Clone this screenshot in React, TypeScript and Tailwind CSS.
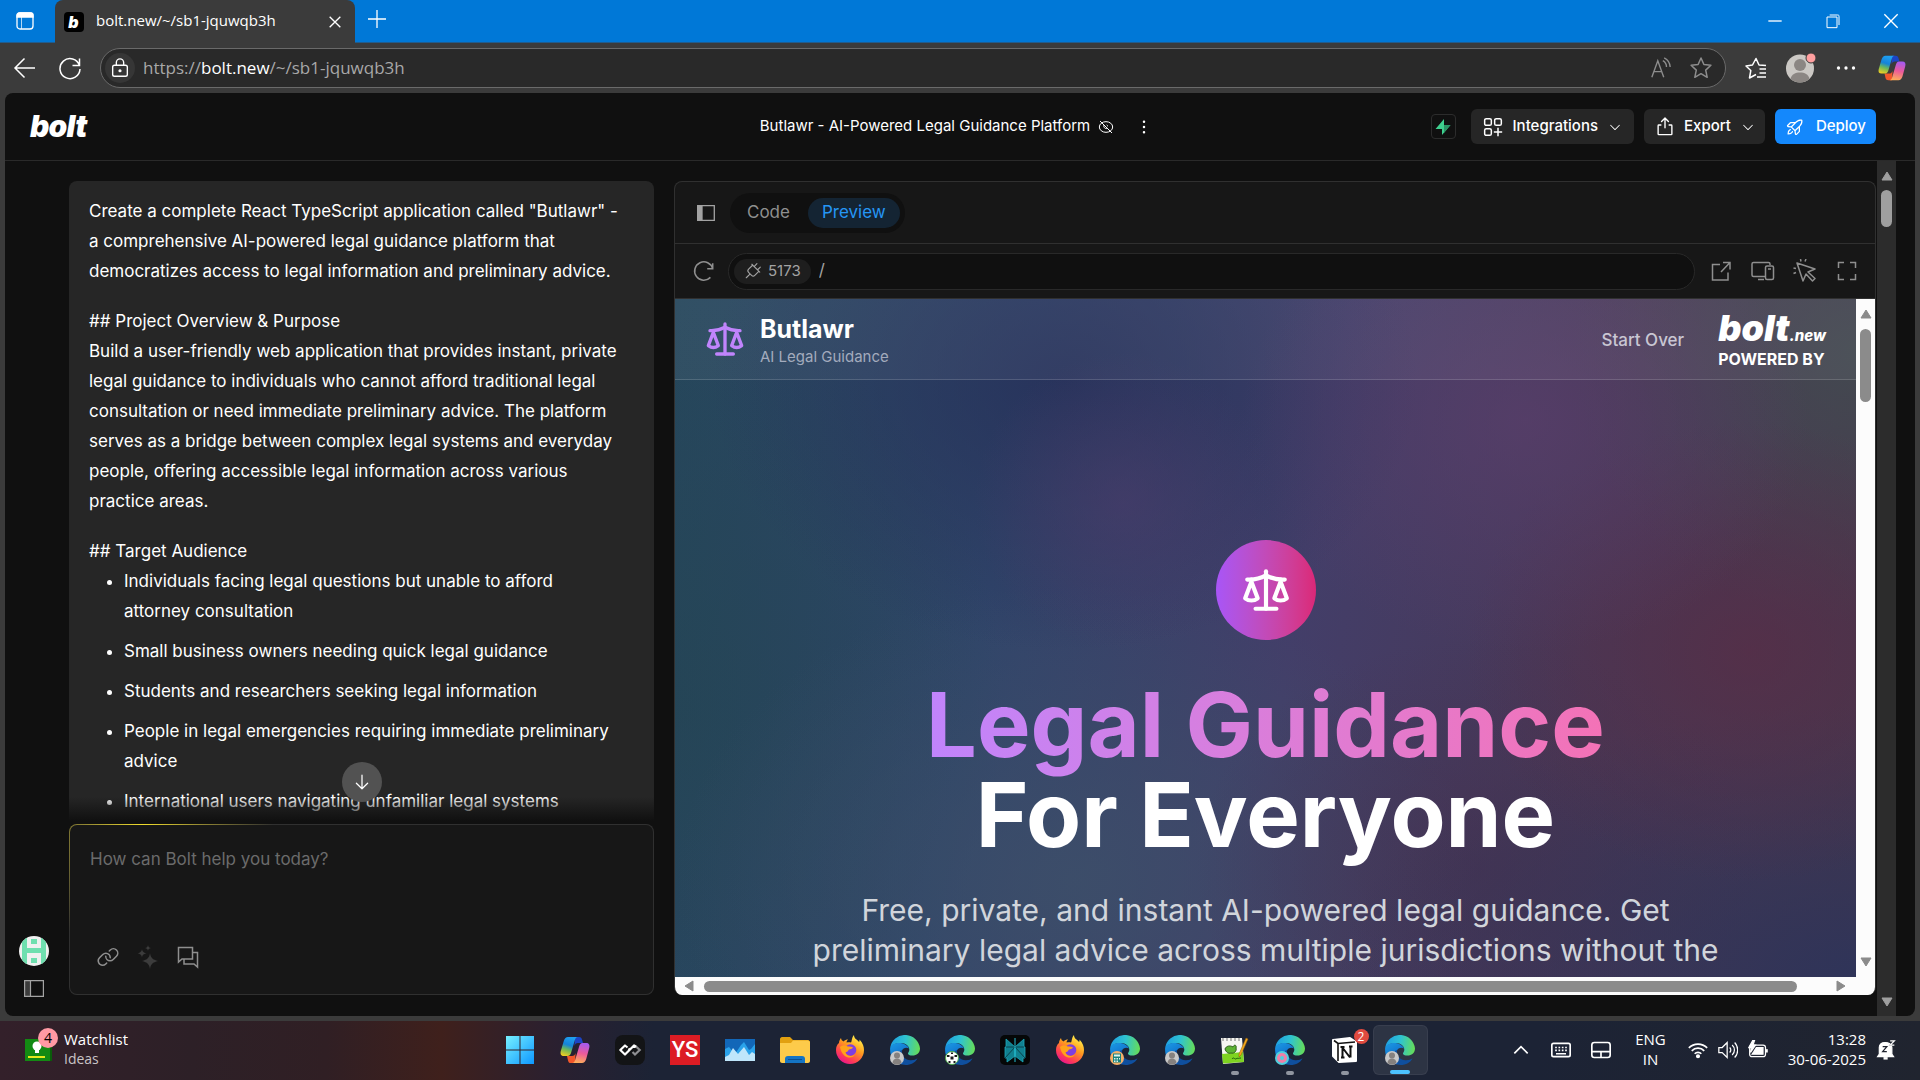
import { type ReactNode, type SVGProps } from "react";
import {
	PiArrowDown,
	PiCaretDown,
	PiDotsThreeVerticalBold,
	PiExport,
	PiLink,
	PiPlug,
	PiRocketLaunch,
} from "react-icons/pi";
import { Scale } from "lucide-react";

const UI = "font-['Inter',sans-serif]";
const SYS = "font-['Open_Sans',sans-serif]";

const Line = ({ children, ...rest }: SVGProps<SVGSVGElement> & { children: ReactNode }) => (
	<svg viewBox="0 0 24 24" fill="none" stroke="currentColor" strokeWidth={1.5} aria-hidden="true" {...rest}>
		{children}
	</svg>
);

const Copilot = ({ className }: { className: string }) => (
	<svg viewBox="0 0 30 30" className={className} aria-hidden="true">
		<defs>
			<linearGradient id="cp1" x1="0.5" y1="0" x2="0.2" y2="1">
				<stop offset="0" stopColor="#1f9ff0" />
				<stop offset="0.4" stopColor="#1583d8" />
				<stop offset="0.65" stopColor="#6cb85a" />
				<stop offset="1" stopColor="#f5cf1f" />
			</linearGradient>
			<linearGradient id="cp2" x1="0.6" y1="0" x2="0.4" y2="1">
				<stop offset="0" stopColor="#a55af0" />
				<stop offset="0.5" stopColor="#ec5a9a" />
				<stop offset="1" stopColor="#fdae5a" />
			</linearGradient>
		</defs>
		<path d="M15 2h4c2 0 2.600 1 3 2.600L23 8h-5c-2 0-3 1-3.600 3z" fill="#1b44c4" />
		<path d="M15 28h-4c-2 0-2.600-1-3-2.600L7 21h5c2 0 3-1 3.600-3z" fill="#f2572b" />
		<path d="M8 2h10c-2 0-2.700 1.500-3.200 3.200L11 18c-.7 2-1.600 3-3.600 3H4c-3 0-4-2-3.200-5l3-10C4.600 3.500 6 2 8 2z" fill="url(#cp1)" />
		<path d="M22 28H12c2 0 2.700-1.500 3.200-3.200L19 12c.7-2.600 1.600-4 3.600-4H26c3 0 4 2 3.200 5l-3 11c-.8 2.500-2.200 4-4.200 4z" fill="url(#cp2)" />
	</svg>
);

const Edge = ({ children }: { children?: ReactNode }) => (
	<svg viewBox="0 0 30 30" className="size-[30px]" aria-hidden="true">
		<defs>
			<linearGradient id="eg1" x1="0" y1="0.4" x2="1" y2="0.5">
				<stop offset="0" stopColor="#1ea0e4" />
				<stop offset="0.5" stopColor="#2fc3d0" />
				<stop offset="1" stopColor="#66dd58" />
			</linearGradient>
			<linearGradient id="eg2" x1="0" y1="0" x2="0.5" y2="1">
				<stop offset="0" stopColor="#1b9be4" />
				<stop offset="1" stopColor="#0d5fc4" />
			</linearGradient>
		</defs>
		<path d="M.2 13A15 15 0 0 1 30 13.500c0 4.500-3.500 7-7.500 7-3.500 0-5-1.300-4.400-2.600.6-1 1.200-1.600 1.200-3.400 0-3.500-3.500-6.500-8.300-6.500C5.600 8 1.500 10 .2 13z" fill="url(#eg1)" />
		<path d="M.1 13C1 9.500 6 7.500 10.500 8c4 .4 7.500 2.800 8.500 5.500-1.600-1.300-6-1.500-7.200 2.500C10.500 21 14 26 19 28.500 9.500 32 0 25.500.1 15z" fill="url(#eg2)" />
		<path d="M12 15c-1.500 6 4 10.500 9 10.200 3 0 4.800-1 6.500-2-2 4.300-6.500 6.800-12 6.800-4.500-1.500-7.500-5.500-7.500-9.500 0-2.600 1.600-5 4-5.500z" fill="#0f4f9e" />
		{children}
	</svg>
);

const Person = () => (
	<>
		<circle cx="7" cy="23" r="7" fill="#c9c9c9" />
		<circle cx="7" cy="20.500" r="3" fill="#85817f" />
		<path d="M2.500 28a4.500 4.500 0 0 1 9 0 7 7 0 0 1-9 0z" fill="#85817f" />
	</>
);

const Firefox = () => (
	<svg viewBox="0 0 30 30" className="size-[30px]" aria-hidden="true">
		<defs>
			<linearGradient id="ff1" x1="0.85" y1="0.1" x2="0.3" y2="1">
				<stop offset="0" stopColor="#fff04a" />
				<stop offset="0.4" stopColor="#ff9a1f" />
				<stop offset="0.75" stopColor="#ff3f52" />
				<stop offset="1" stopColor="#e8158c" />
			</linearGradient>
		</defs>
		<path d="M4 8c0-2 1-4 2-5 .3 2 1 2.600 2.500 3.500C10 5 11.500 4.500 13 4.500c-1 1-1.500 2-1.400 3 1.500-.5 3-.5 4.400 0 1-1 .5-5 3-7.500 0 4 3 4 5 7 .6-.6.600-1.500.5-2.500C28 8 29 12 29 15a14 14 0 0 1-28 0c0-3 1-5.500 3-7z" fill="url(#ff1)" />
		<circle cx="15.500" cy="15" r="5.800" fill="#7f3fe0" />
		<path d="M5 12c3-2.500 6-1.500 8-.500 2 .2 4 0 5 1-1 1.500-3 1.600-4 2-1 .6-1 3-3.500 2.500C11 22 18 22 20 19c-2 6-13 5-15-7z" fill="#ffa31a" />
	</svg>
);

const taskIcons: ReactNode[] = [
	<svg viewBox="0 0 30 30" className="size-[30px]">
		<defs>
			<linearGradient id="win" gradientUnits="userSpaceOnUse" x1="0" y1="0" x2="30" y2="30">
				<stop offset="0" stopColor="#7af3ff" />
				<stop offset="1" stopColor="#0a94ff" />
			</linearGradient>
		</defs>
		<path d="M1 1h13.500v13.500H1zM15.500 1H29v13.500H15.500zM1 15.500h13.500V29H1zM15.500 15.500H29V29H15.500z" fill="url(#win)" />
	</svg>,
	<Copilot className="size-[30px]" />,
	<svg viewBox="0 0 30 30" className="size-[30px]">
		<rect width="30" height="30" rx="8" fill="#131416" />
		<path d="m20 10.500 4.700 4.500-4.700 4.500-2.500-2.500" fill="none" stroke="#8f8f92" strokeWidth="2.200" />
		<path d="m12.500 12.500-2.500-2-4.700 4.500 4.700 4.500 9-9 2 1.500" fill="none" stroke="#fff" strokeWidth="2.200" strokeLinejoin="round" />
		<path d="m13.500 13.500 1.500 1.500" fill="none" stroke="#fff" strokeWidth="2" />
	</svg>,
	<span className="flex size-[30px] items-center justify-center bg-[#dc1c24] font-['Roboto',sans-serif] text-[22px] font-medium leading-none text-white">
		YS
	</span>,
	<svg viewBox="0 0 30 30" className="size-[30px]">
		<path d="M0 4h30v22H0z" fill="#1267b8" />
		<path d="m0 14 4-2 6 7 6-9 3-3 5 8 2-1 4-5v17H0z" fill="#2aa2ea" />
		<path d="m0 22 4-2 4-7 5 6 6-7 5 8 3-3 3 2v7H0z" fill="#bfe6fb" />
	</svg>,
	<svg viewBox="0 0 30 30" className="size-[30px]">
		<path d="M0 4c0-1 1-2 2-2h8l3 3h15c1 0 2 1 2 2v4H0z" fill="#e2a010" />
		<path d="M0 8h11l2-2.500h15c1 0 2 1 2 2V26c0 1-1 2-2 2H2c-1 0-2-1-2-2z" fill="#fdcb4a" />
		<path d="M5 28v-4c0-1.700 1-3 3-3h14c2 0 3 1.300 3 3v4z" fill="#1474c4" />
		<path d="M8 24.500h14" stroke="#0a4f91" />
	</svg>,
	<Firefox />,
	<Edge><Person /></Edge>,
	<Edge>
		<circle cx="7" cy="23" r="6.500" fill="#fff" stroke="#4aa848" />
		<path d="M5.500 21.500h3v3h-3zM2 20h2.500v2H2zM9.500 20H12v2H9.500zM3.500 26h2v2h-2zM8.500 26h2v2h-2zM6 17.500h2v1.500H6z" fill="#1c1c1c" />
	</Edge>,
	<svg viewBox="0 0 30 30" className="size-[30px]">
		<rect width="30" height="30" rx="5" fill="#050707" />
		<path d="M15 12 6 4v8H5v11h2v4l8-6zM15 12l9-8v8h1v11h-2v4l-8-6z" fill="#11818f" stroke="#1ca9ba" strokeWidth="0.800" />
		<path d="M15 12 5 23M15 12l10 11M6 12h18" stroke="#07333a" fill="none" strokeWidth="0.800" />
		<path d="M15 3v24" stroke="#25bccf" />
	</svg>,
	<Firefox />,
	<Edge>
		<circle cx="7" cy="23" r="7" fill="#f4b06a" />
		<path d="M3 18.500h8v9H3z" fill="#17827c" />
		<path d="M4 19.500h6v2H4zM4 23h1.500v1.500H4zM6.500 23H8v1.500H6.500zM9 23h1v1.500H9zM4 25.500h1.500V27H4zM6.500 25.500H8V27H6.500z" fill="#dff5ef" />
	</Edge>,
	<Edge><Person /></Edge>,
	<svg viewBox="0 0 30 30" className="size-[30px]">
		<path d="M1 3h21l2 24-21 2z" fill="#f6f6f2" />
		<path d="m2 19 21-2 1 10-21 1.500z" fill="#7ed321" />
		<path d="M3 3v3M7 3v3M11 3v3M15 3v3M19 3v3" stroke="#777" />
		<path d="M5 14c1-3 5-4 8-2 1-3 4-2 3 1 1 3-2 6-5 5-3 1-5-1-6-4z" fill="#5cb332" stroke="#2d5f1a" />
		<path d="M12 24c2-3 3 2 5-1 1 1 2 0 4 0" stroke="#1f5f12" fill="none" />
		<path d="m19 19 7-16 2 1-7 16-2 2z" fill="#f3a81c" stroke="#8a5a10" strokeWidth="0.500" />
	</svg>,
	<Edge>
		<circle cx="7" cy="23" r="7" fill="#4fd0de" />
		<circle cx="7" cy="23" r="3.500" fill="none" stroke="#ef7fa8" strokeWidth="3" />
	</Edge>,
	<svg viewBox="0 0 30 30" className="size-[30px]">
		<path d="m3 5 17-2 6 4v19l-17 1-6-6z" fill="#fff" stroke="#fff" strokeLinejoin="round" strokeWidth="2" />
		<path d="m4 5.500 4 3 17-1.500M8 8.500V26" stroke="#111" fill="none" strokeWidth="1.600" />
		<path d="M12.500 22.500v-10M12 12l8 10.500M20.500 22.500v-11M10.500 12h4M19 11.500h3.500M11 22.500h3.500" stroke="#111" fill="none" strokeWidth="2" />
	</svg>,
	<Edge><Person /></Edge>,
];

const taskNames = [
	"Start", "Copilot", "Dev Home", "YS", "System monitor", "File Explorer", "Firefox", "Edge", "Edge football",
	"Perplexity", "Firefox 2", "Edge calculator", "Edge profile", "Notepad++", "Edge donut", "Notion", "Edge window",
];

const Triangle = ({ className }: { className: string }) => (
	<svg viewBox="0 0 12 10" className={className} aria-hidden="true">
		<path d="M6 1 11 9H1z" fill="currentColor" stroke="currentColor" strokeLinejoin="round" />
	</svg>
);

function TitleBar() {
	return (
		<div className="flex h-[43px] shrink-0 items-stretch border-b border-[#215c8d] bg-[#0078d7] text-white">
			<button aria-label="Tab actions" className="flex w-[55px] items-center justify-center pr-1.5">
				<svg viewBox="0 0 18 18" className="size-[18px]" fill="none" stroke="#fff" strokeWidth="1.300">
					<rect x="1" y="1" width="16" height="16" rx="3" />
					<path d="M1 3c0-1 1-2 2-2h12c1 0 2 1 2 2v2H1z" fill="#fff" />
					<path d="M5.500 5v12" strokeWidth="1" opacity="0.700" />
				</svg>
			</button>
			<div className="-mb-px flex w-[300px] items-center rounded-t-lg bg-[#3b3b3b] pl-[9px] pr-2.5">
				<span className={`flex size-5 items-center justify-center rounded bg-black pr-px text-base font-black italic leading-none ${UI}`}>
					b
				</span>
				<span className={`ml-3 flex-1 pb-0.5 text-[15px] ${SYS}`}>bolt.new/~/sb1-jquwqb3h</span>
				<button aria-label="Close tab" className="p-0.5">
					<Line className="size-4"><path d="m4 4 16 16M20 4 4 20" strokeWidth="2" /></Line>
				</button>
			</div>
			<button aria-label="New tab" className="flex w-11 items-center justify-center pb-1">
				<Line className="size-6"><path d="M12 3v18M3 12h18" strokeWidth="1.300" /></Line>
			</button>
			<div className="ml-auto flex">
				<button aria-label="Minimize" className="flex w-[58px] items-center justify-center">
					<Line className="size-4"><path d="M2 12h20" strokeWidth="2" /></Line>
				</button>
				<button aria-label="Restore" className="flex w-[58px] items-center justify-center">
					<Line className="size-4"><path d="M3 6h15v16H3zM7 3h12c2 0 2 1 2 2v13" /></Line>
				</button>
				<button aria-label="Close" className="flex w-[58px] items-center justify-center">
					<Line className="size-4"><path d="m2 2 20 20M22 2 2 22" strokeWidth="2" /></Line>
				</button>
			</div>
		</div>
	);
}

function AddressBar() {
	return (
		<div className="flex h-[50px] shrink-0 items-center bg-[#3b3b3b] pb-px text-white">
			<button aria-label="Back" className="flex w-[50px] items-center justify-center">
				<Line className="size-6"><path d="M22 12H2m9.500-9.500L2 12l9.500 9.500" /></Line>
			</button>
			<button aria-label="Refresh" className="flex w-10 items-center justify-center">
				<Line className="size-6"><path d="M21.500 9.500A10 10 0 1 0 22 13M21.500 2.500v7h-7" /></Line>
			</button>
			<div className="ml-2.5 mr-3 flex h-10 flex-1 items-center rounded-full border border-[#6a6a6a] bg-[#292929] px-1">
				<span className="flex size-[30px] items-center justify-center rounded-full bg-[#363636]">
					<Line className="size-[22px]">
						<rect x="4" y="9" width="16" height="12" rx="2" />
						<path d="M8 9V6a4 4 0 0 1 8 0v3" />
						<circle cx="12" cy="15" r="1" fill="currentColor" />
					</Line>
				</span>
				<span className={`ml-2 flex-1 text-[17px] text-[#a8a8a8] ${SYS}`}>
					https://<span className="text-white">bolt.new</span>/~/sb1-jquwqb3h
				</span>
				<button aria-label="Read aloud" className="flex w-10 items-center justify-center text-[#8d8d8d]">
					<Line className="size-[22px]"><path d="m2 22 6.500-18L15 22M4.500 16h8M14 4a8 8 0 0 1 4 7M15.500 1a12 12 0 0 1 6.500 10" /></Line>
				</button>
				<button aria-label="Favourite" className="flex w-10 items-center justify-center text-[#8d8d8d]">
					<Line className="size-6" strokeLinejoin="round"><path d="m12 2 2.900 6.500 7 .8-5.200 4.800 1.500 7.200L12 17.700l-6.200 3.600 1.500-7.200-5.200-4.800 7-.8z" /></Line>
				</button>
			</div>
			<button aria-label="Favourites" className="flex w-9 items-center justify-center">
				<Line className="size-6" strokeLinejoin="round"><path d="M12 18.500 5.500 22l1.300-7.500L2 10l6.500-1L12 2.500 15 9l7 .5M15.500 13H22M15.500 17H22M13 21h9" /></Line>
			</button>
			<button aria-label="Profile" className="flex w-[54px] items-center justify-center">
				<svg viewBox="0 0 30 30" className="size-[30px]">
					<circle cx="14" cy="15.500" r="14" fill="#cbc8c4" />
					<circle cx="14" cy="12" r="6" fill="#8b8683" />
					<path d="M4.500 26c1-5 5-6.500 9.500-6.500s8.500 1.500 9.500 6.500c-5 4.500-14 4.500-19 0z" fill="#8b8683" />
					<circle cx="25" cy="5" r="5" fill="#ff9f9f" stroke="#3b3b3b" />
				</svg>
			</button>
			<button aria-label="Settings" className="flex w-9 items-center justify-center">
				<Line className="size-5" stroke="none" fill="currentColor"><circle cx="3" cy="12" r="2" /><circle cx="12" cy="12" r="2" /><circle cx="21" cy="12" r="2" /></Line>
			</button>
			<button aria-label="Copilot" className="flex w-14 items-center justify-center"><Copilot className="size-7" /></button>
		</div>
	);
}

function AppHeader() {
	return (
		<header className="flex h-[68px] shrink-0 items-center border-b border-[#2a2a2a] pl-[25px] pr-[39px] text-white">
			<div className="flex-1">
				<a href="#" className="text-[30px] font-black italic leading-none tracking-tight">bolt</a>
			</div>
			<div className="flex items-center pl-2">
				<h1 className="text-[15px]">Butlawr - AI-Powered Legal Guidance Platform</h1>
				<Line className="ml-2 size-4"><ellipse cx="12" cy="12" rx="10" ry="8" /><path d="M3 3l18 18M9 9c-1.500 3 2 6.500 5 5M13 9l2 2" /></Line>
				<button aria-label="Project menu" className="ml-5"><PiDotsThreeVerticalBold className="size-5" /></button>
			</div>
			<div className="flex flex-1 items-center justify-end text-[15px] font-medium">
				<button aria-label="Supabase" className="mr-[15px] flex size-[25px] items-center justify-center rounded border border-[#2c2c2c]">
					<svg viewBox="0 0 16 16" className="size-4">
						<path d="M9 0v6h6.500L7 16v-6H.5z" fill="#3ecf8e" />
						<path d="M9 6h6.500L9 14z" fill="#2a9465" />
					</svg>
				</button>
				<button className="mr-2.5 flex h-[35px] items-center rounded-md bg-[#262626] px-3">
					<Line className="mr-2.5 size-5" strokeWidth="1.800"><rect x="2" y="2" width="8" height="8" rx="2" /><rect x="14" y="2" width="8" height="8" rx="2" /><rect x="2" y="14" width="8" height="8" rx="2" /><path d="M18 13v10M13 18h10" /></Line>
					Integrations
					<PiCaretDown className="ml-2.5 size-3.5" />
				</button>
				<button className="mr-2.5 flex h-[35px] items-center rounded-md bg-[#262626] px-2.5">
					<PiExport className="mr-2 size-[22px]" />
					Export
					<PiCaretDown className="ml-2.5 size-3.5" />
				</button>
				<button className="flex h-[35px] items-center rounded-md bg-[#1488fc] px-2.5">
					<PiRocketLaunch className="mr-[11px] size-5" />
					Deploy
				</button>
			</div>
		</header>
	);
}

const audience = [
	["Individuals facing legal questions but unable to afford", "attorney consultation"],
	["Small business owners needing quick legal guidance"],
	["Students and researchers seeking legal information"],
	["People in legal emergencies requiring immediate preliminary", "advice"],
	["International users navigating unfamiliar legal systems"],
];

const Rows = ({ lines }: { lines: string[] }) => (
	<>
		{lines.map((line) => (
			<span key={line} className="block whitespace-nowrap">{line} </span>
		))}
	</>
);

function Chat() {
	return (
		<section className="flex min-h-0 w-[585px] shrink-0 flex-col">
			<div className="relative mb-[3px] min-h-0 flex-1 overflow-hidden rounded-t-lg bg-[#262626] px-5 py-[15px] text-[17px] leading-[30px] text-white">
				<p className="mb-5">
					<Rows lines={['Create a complete React TypeScript application called "Butlawr" -', "a comprehensive AI-powered legal guidance platform that", "democratizes access to legal information and preliminary advice."]} />
				</p>
				<p className="mb-5">
					<Rows lines={["## Project Overview & Purpose", "Build a user-friendly web application that provides instant, private", "legal guidance to individuals who cannot afford traditional legal", "consultation or need immediate preliminary advice. The platform", "serves as a bridge between complex legal systems and everyday", "people, offering accessible legal information across various", "practice areas."]} />
				</p>
				<p>## Target Audience</p>
				<ul className="flex list-disc flex-col gap-2.5 pl-[35px]">
					{audience.map((lines) => (
						<li key={lines[0]}><Rows lines={lines} /></li>
					))}
				</ul>
				<div className="absolute inset-x-0 bottom-0 h-6 bg-linear-to-b from-transparent to-[#101010]" />
				<button aria-label="Scroll to bottom" className="absolute bottom-[19px] left-1/2 flex size-10 -translate-x-1/2 items-center justify-center rounded-full bg-[#525252]">
					<PiArrowDown className="size-5" />
				</button>
			</div>
			<div className="rounded-lg bg-[radial-gradient(circle_at_74px_0,#f0dc2c_0,#8f8433_60px,#303030_130px)] p-px">
				<div className="flex h-[169px] flex-col rounded-[7px] bg-[#171717] px-5 pb-[25px] pt-[22px]">
					<textarea
						aria-label="Message"
						placeholder="How can Bolt help you today?"
						className="w-full flex-1 resize-none bg-transparent text-[17px] leading-6 text-white outline-none placeholder:text-[#6b6b6b]"
					/>
					<div className="flex items-center gap-4 pl-1.5 text-[#8f8f8f]">
						<button aria-label="Attach"><PiLink className="size-6" /></button>
						<button aria-label="Enhance prompt" className="text-[#3c3c3c]">
							<Line className="size-6" fill="currentColor" stroke="none">
								<path d="M14 8c.8 5 2.500 6.500 8 8-5.500 1.500-7.200 3-8 8-.8-5-2.500-6.500-8-8 5.500-1.500 7.200-3 8-8zM6 4c.5 2.700 1.300 3.500 4.500 4.200C7.300 9 6.500 9.800 6 12.500c-.5-2.700-1.300-3.500-4.500-4.300C4.700 7.500 5.500 6.700 6 4zM12 0c.3 2 .9 2.600 3 3-2.100.5-2.700 1-3 3-.3-2-.9-2.500-3-3 2.100-.4 2.700-1 3-3z" />
							</Line>
						</button>
						<button aria-label="Discuss">
							<Line className="size-6"><path d="M2.500 2.500h14v11.500H6l-3.500 3zM16.500 7.500h5V22L18 19H8v-5" /></Line>
						</button>
					</div>
				</div>
			</div>
		</section>
	);
}

function Preview() {
	return (
		<div className="flex min-h-0 flex-1 flex-col bg-[#fcfcfc]">
			<div className="flex min-h-0 flex-1">
				<div className="flex min-w-0 flex-1 flex-col overflow-hidden bg-[radial-gradient(circle_150px_at_38%_30%,#4f3d6c88,transparent),radial-gradient(ellipse_24%_34%_at_72%_18%,#5b3f6caa,transparent),radial-gradient(ellipse_24%_34%_at_91%_52%,#582d46bb,transparent),radial-gradient(ellipse_24%_40%_at_100%_8%,#434a50ee,transparent),radial-gradient(ellipse_30%_40%_at_33%_12%,#252f58cc,transparent),radial-gradient(ellipse_44%_40%_at_100%_100%,#2f3459,transparent),radial-gradient(ellipse_24%_34%_at_68%_84%,#42304e99,transparent),radial-gradient(ellipse_34%_44%_at_34%_86%,#3d5069cc,transparent),radial-gradient(ellipse_28%_60%_at_0%_60%,#234452aa,transparent),linear-gradient(100deg,#26475c_0%,#30456a_28%,#433e69_52%,#483857_75%,#45374c_100%)]">
					<div className="flex h-[81px] shrink-0 items-center border-b border-white/15 bg-white/5 px-[30px]">
						<Scale className="size-10 text-[#c084fc]" />
						<div className="ml-[15px] pt-1">
							<p className="text-[25px] font-bold leading-[30px] text-white">Butlawr</p>
							<p className="text-[15px] leading-[25px] text-[#a3abbd]">AI Legal Guidance</p>
						</div>
						<button className="ml-auto mr-[34px] pt-1 text-[17px] font-medium text-[#c9c6d3]">Start Over</button>
						<a href="#" className="flex flex-col text-white">
							<span className="flex items-baseline font-black italic leading-8">
								<span className="text-4xl leading-8">bolt</span>
								<span className="text-[15px] font-extrabold">.new</span>
							</span>
							<span className="text-base font-bold leading-[14px]">POWERED BY</span>
						</a>
					</div>
					<div className="flex flex-col items-center pt-[160px] text-center">
						<div className="flex size-[100px] shrink-0 items-center justify-center rounded-full bg-linear-to-r from-[#a855f7] to-[#db2777]">
							<Scale className="size-[50px] text-white" />
						</div>
						<h2 className="mt-10 whitespace-nowrap text-[90px] font-bold leading-[90px] text-white">
							<span className="bg-linear-to-r from-[#c084fc] to-[#f472b6] bg-clip-text text-transparent">Legal Guidance</span>
							<br />
							For Everyone
						</h2>
						<p className="mt-[30px] whitespace-nowrap text-[30px] leading-10 text-[#d1d5db]">
							Free, private, and instant AI-powered legal guidance. Get
							<br />
							preliminary legal advice across multiple jurisdictions without the
						</p>
					</div>
				</div>
				<div className="flex w-[19px] flex-col items-center py-2.5 text-[#8b8b8b]">
					<Triangle className="h-2.5 w-3" />
					<div className="mt-2.5 h-[73px] w-[11px] rounded-full bg-[#8b8b8b]" />
					<Triangle className="mt-auto h-2.5 w-3 rotate-180" />
				</div>
			</div>
			<div className="flex h-[18px] shrink-0 items-center px-2 pr-7 text-[#8b8b8b]">
				<Triangle className="h-2.5 w-3 -rotate-90" />
				<div className="ml-[9px] mr-[38px] h-[11px] flex-1 rounded-full bg-[#8b8b8b]" />
				<Triangle className="h-2.5 w-3 rotate-90" />
			</div>
		</div>
	);
}

function Workbench() {
	return (
		<section className="flex min-w-0 flex-1 flex-col overflow-hidden rounded-lg border border-b-0 border-[#303030] bg-[#171717]">
			<div className="flex h-[62px] shrink-0 items-center border-b border-[#303030] pl-[22px]">
				<button aria-label="Toggle chat" className="text-[#a3a3a3]">
					<svg viewBox="0 0 18 16" className="h-4 w-[18px]" fill="none" stroke="currentColor" strokeWidth="1.300"><path d="M.7.700h16.600v14.600H.7z" /><path d="M.7.700H5v14.600H.7z" fill="currentColor" /></svg>
				</button>
				<div className="ml-[15px] flex h-10 items-center rounded-full bg-[#101010] px-[5px] text-[17px] text-[#8f8f8f]">
					<button className="px-3">Code</button>
					<button className="ml-1.5 h-[30px] rounded-full bg-[#142433] px-3.5 text-[#2596f5]">Preview</button>
				</div>
			</div>
			<div className="flex h-[55px] shrink-0 items-center border-b border-[#303030] pl-[18px] pr-4 text-[#8f8f8f]">
				<button aria-label="Reload preview">
					<Line className="size-[22px]"><path d="M21.500 3.500v6h-6M21.500 9.500A10 10 0 1 0 19 19" strokeWidth="1.700" /></Line>
				</button>
				<div className="ml-[13px] flex h-[37px] flex-1 items-center rounded-full border border-[#292929] bg-[#101010] pl-[5px] text-[#a3a3a3]">
					<span className="flex h-[25px] items-center rounded-full bg-[#1e1e1e] px-2.5 text-[15px]">
						<PiPlug className="mr-1.5 size-[18px]" />
						5173
					</span>
					<input aria-label="Preview path" defaultValue="/" className="ml-2 min-w-0 flex-1 bg-transparent text-[17px] outline-none" />
				</div>
				<div className="ml-[14px] flex items-center gap-[18px]">
					<button aria-label="Open in new tab"><Line className="size-6"><path d="M11 5.500H3.500V21H19v-7.500M14 3.500h7v7M21 3.500 12 13" /></Line></button>
					<button aria-label="Device size"><Line className="size-6"><path d="M14 17.500H2.500c-1 0-1.500-.5-1.500-1.500V5c0-1 .5-1.500 1.500-1.500h15c1 0 1.500.5 1.500 1.500v1M7 20.500h6" /><rect x="14.500" y="7" width="8" height="13.500" rx="1.500" /><path d="M17 10h3" /></Line></button>
					<button aria-label="Select element"><Line className="size-6" strokeLinejoin="round"><path d="m4 4 18 6-7 3 7 6.500-2.500 2.500-6.500-7-3 7zM8 2.500 7.500 0M12 2.500l1-2.500M3 9.500.500 9M3 13.500l-2.500 1" /></Line></button>
					<button aria-label="Full screen"><Line className="size-6"><path d="M3.500 9V3.500H9M15 3.500h5.500V9M20.500 15v5.500H15M9 20.500H3.500V15" /></Line></button>
				</div>
			</div>
			<Preview />
		</section>
	);
}

function Taskbar() {
	return (
		<footer className={`grid h-[59px] shrink-0 grid-cols-[1fr_auto_1fr] items-center bg-[linear-gradient(90deg,#33202a_0%,#2d2027_10%,#301f24_17%,#3f201c_23%,#2a2030_29%,#1c2335_34%,#1c2335_80%,#20242f_100%)] pb-px text-white ${SYS}`}>
			<button className="flex items-center pl-6 text-left">
				<span className="relative mr-3">
					<svg viewBox="0 0 28 24" className="h-6 w-7"><path d="M1 1h25v22H1z" fill="#138a13" /><path d="M26 4h2v19h-2z" fill="#0a5c0a" /><circle cx="13" cy="8" r="4.500" fill="#fff" /><path d="M11 12h4v3h-4z" fill="#fff" /><path d="M4 18h17v2H4z" fill="#e5e81c" /></svg>
					<span className="absolute -right-1.5 -top-2.5 flex size-5 items-center justify-center rounded-full bg-[#ff99a4] text-sm leading-none text-black">4</span>
				</span>
				<span className="pb-0.5 text-[15px] leading-5">
					Watchlist
					<span className="block text-sm leading-5 text-[#c9c4c6]">Ideas</span>
				</span>
			</button>
			<nav className="flex h-full items-center">
				{taskIcons.map((icon, i) => (
					<button key={taskNames[i]} aria-label={taskNames[i]} className={`relative flex h-[50px] w-[55px] items-center justify-center ${i === 16 ? "rounded-md border border-white/5 bg-white/8" : ""}`}>
						{icon}
						{i >= 13 && i < 16 && <span className="absolute bottom-0 h-1 w-2 rounded-full bg-[#9095a0]" />}
						{i === 15 && <span className="absolute right-1 top-1 flex size-[15px] items-center justify-center rounded-full bg-[#e04a3f] text-xs leading-none">2</span>}
						{i === 16 && <span className="absolute bottom-0 h-1 w-5 rounded-full bg-[#4cc2ff]" />}
					</button>
				))}
			</nav>
			<div className="flex items-center justify-end pr-6">
				<button aria-label="Hidden icons" className="mr-[22px]"><Line className="size-4" strokeWidth="2.500"><path d="m2 17 10-10 10 10" /></Line></button>
				<button aria-label="Touch keyboard" className="mr-5"><Line className="size-5" strokeWidth="2"><rect x="1" y="4" width="22" height="16" rx="2" /><path d="M5 9h2m2 0h2m2 0h2m2 0h2M5 12.500h2m2 0h2m2 0h2m2 0h2M6 16.500h12" /></Line></button>
				<button aria-label="Touchpad" className="mr-6"><Line className="size-5" strokeWidth="2"><rect x="1" y="3" width="22" height="18" rx="3" /><path d="M1 14h22M12 14v7" /></Line></button>
				<button className="mr-[22px] pb-0.5 text-center text-[15px] leading-5">ENG<br />IN</button>
				<button aria-label="Network, sound and battery" className="mr-5 flex gap-2.5">
					<Line className="size-5" strokeWidth="2"><path d="M1 9.500a15.500 15.500 0 0 1 22 0M4.500 13a10.500 10.500 0 0 1 15 0M8 16.500a5.500 5.500 0 0 1 8 0" /><circle cx="12" cy="19.500" r="1.500" fill="currentColor" /></Line>
					<Line className="size-5"><path d="M1 9h4l6-6v18l-6-6H1zM14 9a4 4 0 0 1 0 6M17 6a8 8 0 0 1 0 12M20 3a13 13 0 0 1 0 18" /></Line>
					<Line className="size-5"><rect x="2" y="6" width="19" height="14" rx="3" /><path d="M10 9h8v8H5l2-3z" fill="currentColor" /><path d="M22.500 11v4" strokeWidth="2.500" /><path d="M6 0 1 9h3l-1 6 6-9H6l2-6z" fill="currentColor" /></Line>
				</button>
				<button className="mr-2.5 pb-0.5 text-right text-[15px] leading-5">13:28<br />30-06-2025</button>
				<Line className="size-5"><path d="M4 17V9c0-4 3-6 7-6 4 0 8 2 8 6v8l2 3H2z" fill="currentColor" /><path d="M9 22h5" strokeWidth="3" /><path d="M8 8h5l-5 6h5M17 1h5l-5 5h5" stroke="#20242f" /><path d="M17 1h5l-5 5h5" /></Line>
			</div>
		</footer>
	);
}

export default function App() {
	return (
		<div className={`flex h-screen flex-col overflow-hidden bg-[#3b3b3b] ${UI}`}>
			<TitleBar />
			<AddressBar />
			<main className="mx-[5px] mb-[5px] flex min-h-0 flex-1 flex-col overflow-hidden rounded-lg bg-[#101010]">
				<AppHeader />
				<div className="flex min-h-0 flex-1 pr-[19px]">
					<aside className="flex w-16 shrink-0 flex-col items-center justify-end gap-3.5 pb-[19px] pr-1.5">
						<svg viewBox="0 0 30 30" className="size-[30px] rounded-full">
							<path d="M0 0h30v30H0z" fill="#f0f0f0" />
							<path d="M3 0h5v30H3zM22 0h5v30h-5zM3 12h24v5H3zM12 3h6v5h-6zM12 22h6v5h-6z" fill="#6fdfaf" />
						</svg>
						<button aria-label="Toggle sidebar" className="text-[#a3a3a3]">
							<svg viewBox="0 0 20 17" className="h-[17px] w-5" fill="none" stroke="currentColor" strokeWidth="1.200"><path d="M1 1h5v15H1z" fill="#3c3c3c" stroke="none" /><path d="M.6.600h18.800v15.800H.6zM6.500.600v15.800" /></svg>
						</button>
					</aside>
					<div className="flex min-h-0 min-w-0 flex-1 gap-5 pb-[21px] pr-px pt-5">
						<Chat />
						<Workbench />
					</div>
					<div className="flex w-[19px] shrink-0 flex-col items-center bg-[#2c2c2c] pb-[9px] pt-2.5 text-[#9f9f9f]">
						<Triangle className="h-2.5 w-3" />
						<div className="mt-[9px] h-[37px] w-[11px] rounded-full bg-[#9f9f9f]" />
						<Triangle className="mt-auto h-2.5 w-3 rotate-180" />
					</div>
				</div>
			</main>
			<Taskbar />
		</div>
	);
}
